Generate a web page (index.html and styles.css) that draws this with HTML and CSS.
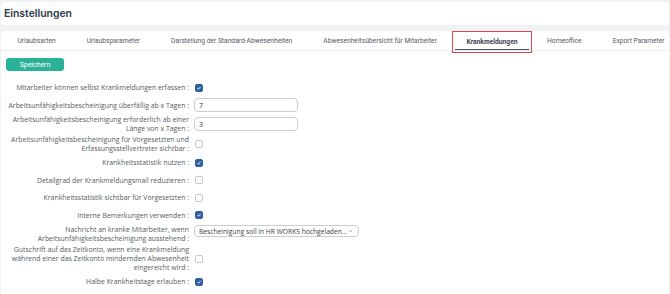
FILE: index.html
```html
<!DOCTYPE html>
<html lang="de">
<head>
<meta charset="utf-8">
<title>Einstellungen</title>
<link rel="stylesheet" href="styles.css">
</head>
<body>
<div class="page">
  <header class="head-card">
    <h1 class="title">Einstellungen</h1>
  </header>
  <main class="main-card">
    <nav class="tabs">
      <span class="tab">Urlaubsarten</span>
      <span class="tab">Urlaubsparameter</span>
      <span class="tab">Darstellung der Standard-Abwesenheiten</span>
      <span class="tab">Abwesenheitsübersicht für Mitarbeiter</span>
      <span class="tab tab-active"><span class="tab-label">Krankmeldungen</span></span>
      <span class="tab">Homeoffice</span>
      <span class="tab">Export Parameter</span>
    </nav>
    <div class="toolbar">
      <button class="btn-save">Speichern</button>
    </div>
    <form class="form">
      <div class="row r1">
        <label class="lbl">Mitarbeiter können selbst Krankmeldungen erfassen :</label>
        <span class="cb on"><svg viewBox="0 0 8 8"><path d="M2 4.2 L3.4 5.6 L6 2.4"/></svg></span>
      </div>
      <div class="row r2">
        <label class="lbl">Arbeitsunfähigkeitsbescheinigung überfällig ab x Tagen :</label>
        <span class="inp">7</span>
      </div>
      <div class="row r3">
        <label class="lbl">Arbeitsunfähigkeitsbescheinigung erforderlich ab einer<br>Länge von x Tagen :</label>
        <span class="inp">3</span>
      </div>
      <div class="row r4">
        <label class="lbl">Arbeitsunfähigkeitsbescheinigung für Vorgesetzten und<br>Erfassungsstellvertreter sichtbar :</label>
        <span class="cb"></span>
      </div>
      <div class="row">
        <label class="lbl">Krankheitsstatistik nutzen :</label>
        <span class="cb on"><svg viewBox="0 0 8 8"><path d="M2 4.2 L3.4 5.6 L6 2.4"/></svg></span>
      </div>
      <div class="row">
        <label class="lbl">Detailgrad der Krankmeldungsmail reduzieren :</label>
        <span class="cb"></span>
      </div>
      <div class="row">
        <label class="lbl">Krankheitsstatistik sichtbar für Vorgesetzten :</label>
        <span class="cb"></span>
      </div>
      <div class="row">
        <label class="lbl">Interne Bemerkungen verwenden :</label>
        <span class="cb on"><svg viewBox="0 0 8 8"><path d="M2 4.2 L3.4 5.6 L6 2.4"/></svg></span>
      </div>
      <div class="row row-top">
        <label class="lbl">Nachricht an kranke Mitarbeiter, wenn<br>Arbeitsunfähigkeitsbescheinigung ausstehend :</label>
        <span class="sel"><span class="sel-text">Bescheinigung soll in HR WORKS hochgeladen...</span><svg class="chev" viewBox="0 0 6 4"><path d="M1 1 L3 3 L5 1"/></svg></span>
      </div>
      <div class="row">
        <label class="lbl">Gutschrift auf das Zeitkonto, wenn eine Krankmeldung<br>während einer das Zeitkonto mindernden Abwesenheit<br>eingereicht wird :</label>
        <span class="cb"></span>
      </div>
      <div class="row">
        <label class="lbl">Halbe Krankheitstage erlauben :</label>
        <span class="cb on"><svg viewBox="0 0 8 8"><path d="M2 4.2 L3.4 5.6 L6 2.4"/></svg></span>
      </div>
    </form>
  </main>
</div>
</body>
</html>
```
FILE: styles.css
```css
* { box-sizing: border-box; }
html, body { margin: 0; padding: 0; }
body {
  background: #f1f2f4;
  font-family: "Open Sans", "Liberation Sans", sans-serif;
  width: 670px;
  height: 294px;
  overflow: hidden;
}
.page {
  padding: 2px 1px 0 1px;
  display: flex;
  flex-direction: column;
  gap: 6px;
}
.head-card {
  background: #fff;
  border-radius: 4px;
  height: 23px;
  display: flex;
  align-items: center;
  padding-left: 3px;
  padding-bottom: 1px;
}
.title {
  margin: 0;
  font-family: Inter, Roboto, sans-serif;
  font-weight: 600;
  font-size: 10.4px;
  color: #2c3a4b;
}
.main-card {
  background: #fff;
  border-radius: 4px 4px 0 0;
  height: 265px;
}
.tabs {
  display: flex;
  height: 20px;
  padding-left: 1px;
  border-bottom: 1px solid #eceef0;
}
.tab {
  font-family: Roboto, "Liberation Sans", sans-serif;
  font-size: 6.7px;
  color: #555c66;
  padding: 0 15.5px;
  display: flex;
  align-items: center;
  white-space: nowrap;
}
.tab-active {
  padding: 0 13px;
  height: 22px;
  border: 1px solid #d9474f;
  position: relative;
  font-weight: 700;
  color: #3a4452;
}
.tab-active::after {
  content: "";
  position: absolute;
  left: 2px;
  right: 2px;
  bottom: 2px;
  height: 1px;
  background: #4a5563;
}
.toolbar {
  padding: 7px 5px 0 5px;
  height: 22px;
}
.btn-save {
  background: #2bb197;
  color: #fff;
  border: none;
  border-radius: 3px;
  width: 58px;
  height: 13px;
  font-family: Roboto, sans-serif;
  font-size: 6.9px;
  padding: 0;
  display: flex;
  align-items: center;
  justify-content: center;
}
.form {
  padding-top: 7px;
  display: flex;
  flex-direction: column;
  gap: 2px;
}
.row {
  display: flex;
  align-items: center;
  min-height: 15.5px;
  gap: 5px;
}
.row-top { align-items: flex-start; }
.lbl {
  width: 188px;
  text-align: right;
  white-space: nowrap;
  font-size: 6.9px;
  line-height: 9px;
  color: #555a60;
}
.cb {
  width: 8px;
  height: 8px;
  border: 1px solid #c5c8cc;
  border-radius: 2px;
  background: #fff;
  display: flex;
  margin-left: 1px;
}
.cb.on {
  background: #31609f;
  border-color: #31609f;
}
.cb svg { width: 100%; height: 100%; }
.cb svg path { fill: none; stroke: #fff; stroke-width: 1.2; }
.inp {
  width: 104px;
  height: 14px;
  border: 1px solid #c9ccd0;
  border-radius: 4px;
  font-size: 7px;
  color: #333;
  padding-left: 4px;
  display: flex;
  align-items: center;
}
.sel {
  width: 165px;
  height: 12px;
  border: 1px solid #c9ccd0;
  border-radius: 4px;
  font-size: 6.7px;
  color: #3a3f45;
  padding: 0 5px 0 4px;
  display: flex;
  align-items: center;
  justify-content: space-between;
  white-space: nowrap;
}
.chev { width: 5px; height: 4px; flex: none; }
.chev path { fill: none; stroke: #777; stroke-width: 0.8; }
```
